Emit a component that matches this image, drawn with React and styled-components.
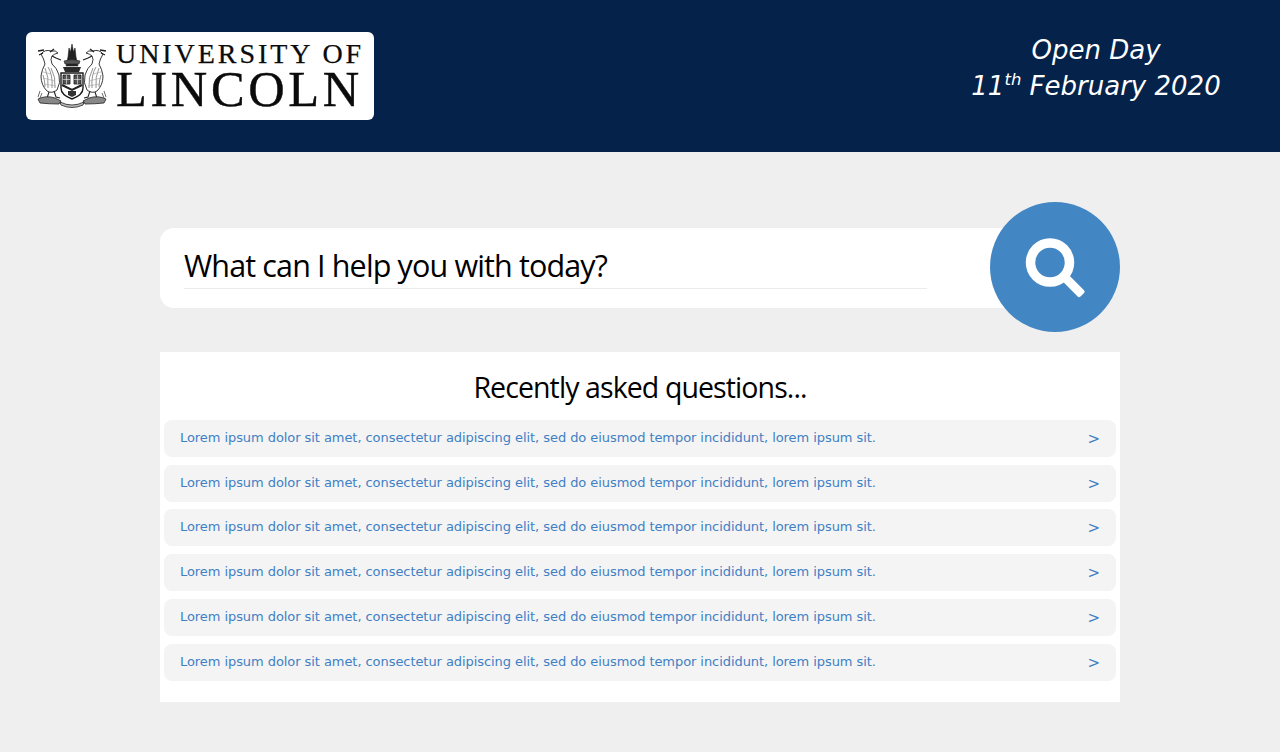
import React from 'react';
import styled, { createGlobalStyle } from 'styled-components';

const GlobalStyle = createGlobalStyle`
  html, body {
    margin: 0;
    padding: 0;
    background: #efefef;
  }
  * {
    box-sizing: border-box;
  }
`;

const Header = styled.header`
  height: 152px;
  background: #05224a;
  display: flex;
  align-items: center;
  justify-content: space-between;
  padding: 0 59px 0 26px;
`;

const Logo = styled.div`
  width: 348px;
  height: 88px;
  background: #fff;
  border-radius: 6px;
  display: flex;
  align-items: center;
  padding: 0 12px 0 11px;
  gap: 9px;
  color: #0b0b0b;
  font-family: "Liberation Serif", serif;
`;

const LogoWords = styled.div`
  display: flex;
  flex-direction: column;
  width: 246px;
`;

const LogoTop = styled.div`
  font-size: 28px;
  line-height: 25px;
  letter-spacing: 2.95px;
  white-space: nowrap;
  -webkit-text-stroke: 0.25px #0b0b0b;
`;

const LogoBottom = styled.div`
  margin-top: 2px;
  font-size: 50.5px;
  line-height: 43px;
  letter-spacing: 3.6px;
  white-space: nowrap;
  -webkit-text-stroke: 0.4px #0b0b0b;
`;

const EventInfo = styled.div`
  width: 250px;
  padding-bottom: 16px;
  color: #fff;
  font-family: "DejaVu Sans", Verdana, sans-serif;
  font-style: italic;
  font-size: 26px;
  line-height: 36px;
  text-align: center;
  white-space: nowrap;
  sup {
    font-size: 16.5px;
    line-height: 0;
  }
`;

const Main = styled.main`
  width: 960px;
  margin: 0 auto;
  padding-top: 76px;
`;

const SearchWrap = styled.div`
  position: relative;
  margin-bottom: 44px;
`;

const SearchBar = styled.div`
  width: 890px;
  height: 80px;
  background: #fff;
  border-radius: 14px;
  padding: 18px 0 0 24px;
`;

const SearchText = styled.div`
  width: 743px;
  height: 43px;
  border-bottom: 1px solid #ececec;
  color: #000;
  font-family: "Open Sans", sans-serif;
  font-size: 30.5px;
  line-height: 39px;
  letter-spacing: -0.86px;
  white-space: nowrap;
`;

const SearchButton = styled.button`
  position: absolute;
  right: 0;
  top: -26px;
  width: 130px;
  height: 130px;
  border: 0;
  padding: 0;
  border-radius: 50%;
  background: #4286c4;
  display: flex;
  align-items: center;
  justify-content: center;
`;

const Panel = styled.section`
  height: 350px;
  background: #fff;
  padding: 14px 4px 0;
`;

const PanelTitle = styled.h2`
  margin: 0 0 12px;
  color: #000;
  font-family: "Open Sans", sans-serif;
  font-weight: 400;
  font-size: 28.5px;
  line-height: 42px;
  letter-spacing: -0.9px;
  text-align: center;
`;

const QuestionList = styled.div`
  display: flex;
  flex-direction: column;
  gap: 7.72px;
`;

const Question = styled.div`
  height: 37px;
  background: #f4f4f4;
  border-radius: 8px;
  display: flex;
  justify-content: space-between;
  padding: 0 16px 0 16px;
  color: #3f80c4;
  font-family: "DejaVu Sans", Verdana, sans-serif;
`;

const QuestionText = styled.span`
  font-size: 13px;
  line-height: 35px;
  letter-spacing: -0.065px;
  white-space: nowrap;
`;

const Chevron = styled.span`
  font-size: 15px;
  line-height: 38px;
`;

const Supporter = () => (
  <g>
    <path d="M4 10 Q8 5 14 7 Q19 6 21 9 Q17 10 15 12 Q13 15 15 20 Q20 24 22 31 Q24 39 20 46 Q15 50 10 47 Q4 41 4 32 Q5 25 8 20 Q7 15 4 10 Z" fill="#fff" stroke="#222" strokeWidth="0.9" />
    <path d="M1 7 L7 6 M2 11 L6 9 M13 8 L17 5 M15 12 L19 14 L24 16" stroke="#222" strokeWidth="1.3" />
    <path d="M8 24 Q12 33 11 44 M11 23 Q16 31 15 44 M14 24 Q19 33 18 44 M6 31 Q8 37 8 43" stroke="#777" strokeWidth="0.8" />
    <path d="M6 28 L14 30 M6 34 L18 37 M7 40 L19 42" stroke="#aaa" strokeWidth="0.7" />
    <path d="M12 48 L10 54 L14 55 M17 47 L19 53 L23 54" stroke="#222" strokeWidth="1.1" />
    <path d="M1 55 Q9 51 18 54 L24 57 L22 60 Q12 60 3 59 Z" fill="#888" stroke="#222" strokeWidth="0.8" />
    <path d="M3 47 L1 53 M5 49 L3 54" stroke="#444" strokeWidth="0.8" />
  </g>
);

const Crest = () => (
  <svg width="70" height="64" viewBox="0 0 70 64" fill="none">
    <Supporter />
    <g transform="translate(70 0) scale(-1 1)">
      <Supporter />
    </g>
    <path d="M31 13 L32 4 L33.5 8 L35 0 L36.5 8 L38 4 L39 13 L41 22 L29 22 Z" fill="#222" stroke="#222" strokeWidth="0.6" />
    <path d="M27 17 Q35 14 43 17 L42 20 H28 Z" fill="#555" stroke="#222" strokeWidth="0.6" />
    <path d="M26 23 H44 L42 28 H28 Z" fill="#2a2a2a" />
    <path d="M24 29 H46 V44 Q46 51 35 55 Q24 51 24 44 Z" fill="#fff" stroke="#1a1a1a" strokeWidth="1.4" />
    <path d="M26 31 H33 V40 H26 Z M37 31 H44 V40 H37 Z" fill="#555" stroke="#1a1a1a" strokeWidth="0.8" />
    <path d="M29.5 31 V40 M26 35.5 H33 M40.5 31 V40 M37 35.5 H44" stroke="#ddd" strokeWidth="0.7" />
    <path d="M25 41 L35 46 L45 41" stroke="#222" strokeWidth="2" />
    <path d="M31 47 H39 V51 L35 53 L31 51 Z" fill="#333" />
    <path d="M23 58 Q35 64 47 58 L46 61 Q35 66 24 61 Z" fill="#bbb" stroke="#222" strokeWidth="0.8" />
  </svg>
);

const SearchIcon = () => (
  <svg width="60" height="60" viewBox="0 0 60 60" fill="none" stroke="#fff" overflow="visible">
    <circle cx="25" cy="25.5" r="19.5" strokeWidth="9.5" />
    <rect x="0" y="-4.5" width="23" height="9" rx="2" fill="#fff" stroke="none" transform="translate(41 41.5) rotate(45)" />
  </svg>
);

const questions = Array.from({ length: 6 }, () =>
  'Lorem ipsum dolor sit amet, consectetur adipiscing elit, sed do eiusmod tempor incididunt, lorem ipsum sit.'
);

export default function App() {
  return (
    <>
      <GlobalStyle />
      <Header>
        <Logo>
          <Crest />
          <LogoWords>
            <LogoTop>UNIVERSITY OF</LogoTop>
            <LogoBottom>LINCOLN</LogoBottom>
          </LogoWords>
        </Logo>
        <EventInfo>
          Open Day
          <br />
          11<sup>th</sup> February 2020
        </EventInfo>
      </Header>
      <Main>
        <SearchWrap>
          <SearchBar>
            <SearchText>What can I help you with today?</SearchText>
          </SearchBar>
          <SearchButton aria-label="Search">
            <SearchIcon />
          </SearchButton>
        </SearchWrap>
        <Panel>
          <PanelTitle>Recently asked questions...</PanelTitle>
          <QuestionList>
            {questions.map((q, i) => (
              <Question key={i}>
                <QuestionText>{q}</QuestionText>
                <Chevron>&gt;</Chevron>
              </Question>
            ))}
          </QuestionList>
        </Panel>
      </Main>
    </>
  );
}
